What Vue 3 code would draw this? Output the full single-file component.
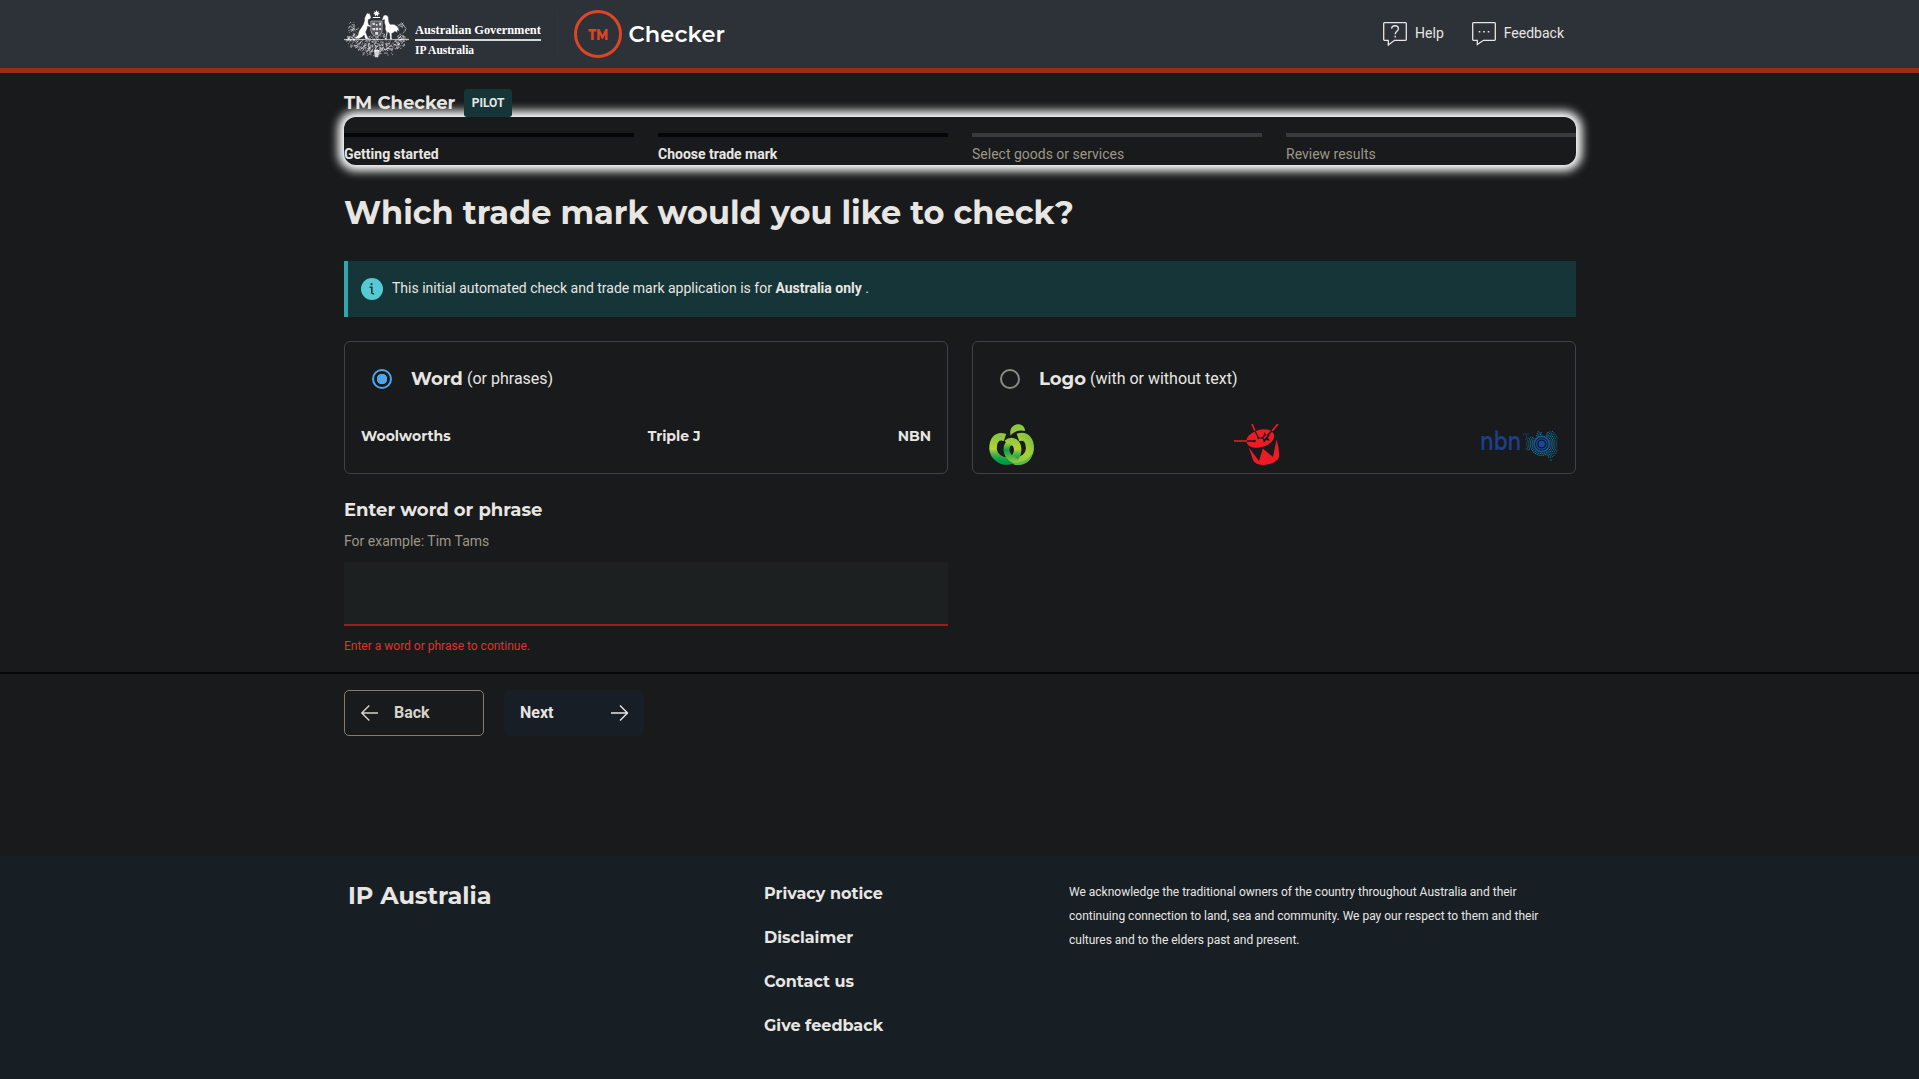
<script setup>
const steps = [
  { label: 'Getting started', done: true },
  { label: 'Choose trade mark', done: true },
  { label: 'Select goods or services', done: false },
  { label: 'Review results', done: false },
]
const links = ['Privacy notice', 'Disclaimer', 'Contact us', 'Give feedback']

// Small deterministic generator for the wattle foliage of the crest
function makeRandom(seed) {
  let s = seed
  return () => {
    s = (s * 16807) % 2147483647
    return s / 2147483647
  }
}
const rnd = makeRandom(77)
const curls = []
function addCurls(n, cx, cy, rx, ry) {
  for (let i = 0; i < n; i++) {
    const a = rnd() * Math.PI * 2
    const r = Math.sqrt(rnd())
    const x = cx + Math.cos(a) * r * rx
    const y = cy + Math.sin(a) * r * ry
    const dx = (rnd() - 0.5) * 12
    const dy = (rnd() - 0.5) * 9
    curls.push(`M${x.toFixed(1)} ${y.toFixed(1)}q${dy.toFixed(1)} ${dx.toFixed(1)} ${dx.toFixed(1)} ${dy.toFixed(1)}`)
  }
}
addCurls(200, 98, 105, 86, 18)
addCurls(110, 98, 120, 55, 20)
addCurls(44, 28, 60, 15, 27)
addCurls(34, 172, 62, 13, 27)
addCurls(30, 18, 88, 16, 7)
addCurls(28, 178, 88, 16, 7)
addCurls(28, 98, 76, 28, 12)
const foliage = curls.join('')

// Dotted map around the nbn rings
const dots = []
for (let k = 0; k < 5; k++) {
  const r = 9.6 + k * 1.75
  const n = Math.round(r * 3.1)
  for (let i = 0; i < n; i++) {
    const a = (i / n) * Math.PI * 2
    const x = Math.cos(a) * r
    const y = Math.sin(a) * r
    const inside = Math.abs(x) < 16 && y > -13 && y < 14 && !(y < -9 && Math.abs(x - 2) < 2.5)
      && !(y > 8 && x < 5 && k > 1) && !(y < -7 && x < -5) && !(y > 6 && x < -10)
    if (inside) dots.push({ x: 61.7 + x, y: 20 + y, r: 0.72 - k * 0.05 })
  }
}
</script>

<template>
  <div class="page">
    <header class="header">
      <div class="wrap header-row">
        <div class="gov">
          <svg class="crest" viewBox="0 0 196 144" width="65" height="48">
            <path :d="foliage" fill="none" stroke="#fff" stroke-width="1.800" opacity=".8" />
            <path d="M0 89h196" stroke="#fff" stroke-width="3" opacity=".75" />
            <path d="M70 8l3 4 3-4 4 9q3 5 0 8l-7 4q-1 8 1 14l8 5-1 3-10-2q-1 11-6 17l7 17 5 1v3H64l-3-12q-7 9-17 11-9 1-17-1 11-3 15-9 2-15 11-24 7-9 9-21-1-8 3-13z" fill="#fff" stroke="#2d3138" stroke-width="1" />
            <path d="M119 17q6-5 12 0 4 4 3 10 0 9 5 16 11-2 19 4 7 6 9 17l-7-3 1 7-8-4q-4 6-9 6v15l5 4h-13l3-4-2-16-5-2-4 17 4 5h-12l5-5 3-18q-6-8-3-18-4-8-3-20l-8 3z" fill="#fff" stroke="#2d3138" stroke-width="1" />
            <path d="M81 33h34v30q-2 12-17 18-15-6-17-18z" fill="#565a60" stroke="#c5c6c8" stroke-width="2" />
            <path d="M86 38h7v7h-7zM96 42h5v5h-5zM106 37h6v9h-6zM86 54h8v7h-8zM96 53h7v8h-7zM106 54h6v6h-6zM94 66h9v8h-9z" fill="#fff" opacity=".8" />
            <path d="M98 0l2.500 5.500 5.500-2-2.500 5.500 5 3-6 1 0 6-4.500-4-4.500 4 0-6-6-1 5-3-2.500-5.500 5.500 2zM87 21h22v3H87z" fill="#fff" />
            <path d="M90 120h16l-3 22h-10z" fill="#fff" opacity=".75" />
          </svg>
          <div class="gov-text">
            <span class="gov-name">Australian Government</span>
            <span class="gov-agency">IP Australia</span>
          </div>
        </div>
        <svg class="brand" viewBox="0 0 160 50" width="160" height="50">
          <circle cx="25" cy="25" r="22.500" fill="none" stroke="#dd4527" stroke-width="3" />
          <text x="15.300" y="30.600" textLength="19.800" lengthAdjust="spacingAndGlyphs" class="brand-tm">TM</text>
          <text x="55.500" y="32.800" textLength="96.500" class="brand-name">Checker</text>
        </svg>
        <nav class="tools">
          <a class="tool">
            <svg viewBox="0 0 24 24" width="24" height="24" fill="none" stroke="#e8e6e3" stroke-width="1.300">
              <path d="M1.500.700h21a.8.8 0 0 1 .8.8v16a.8.8 0 0 1-.8.8H11.500L5.300 23v-4.700H1.500a.8.8 0 0 1-.8-.8v-16a.8.8 0 0 1 .8-.8z" />
              <path d="M8.700 6.700C8.700 4.600 10 3.700 12 3.700s3.400 1.200 3.400 3c0 2.600-3.200 2.600-3.200 5.600M12.200 13.800v1.700" stroke-width="1.400" />
            </svg>
            <span>Help</span>
          </a>
          <a class="tool">
            <svg viewBox="0 0 24 24" width="24" height="24" fill="none" stroke="#e8e6e3" stroke-width="1.300">
              <path d="M1.500.700h21a.8.8 0 0 1 .8.8v16a.8.8 0 0 1-.8.8H11.500L5.300 22.500v-4.200H1.500a.8.8 0 0 1-.8-.8v-16a.8.8 0 0 1 .8-.8z" />
              <path d="M6.700 9.800h1.600M11.200 9.800h1.600M15.700 9.800h1.600" stroke-width="1.600" />
            </svg>
            <span>Feedback</span>
          </a>
        </nav>
      </div>
    </header>

    <main class="main">
      <div class="wrap">
        <div class="title-row">
          <span class="app-title heading">TM Checker</span>
          <span class="badge">PILOT</span>
        </div>
        <ol class="stepper">
          <li v-for="s in steps" :key="s.label" class="step" :class="{ done: s.done }">{{ s.label }}</li>
        </ol>
        <h1 class="question heading">Which trade mark would you like to check?</h1>
        <div class="alert">
          <svg viewBox="0 0 22 22" width="22" height="22">
            <circle cx="11" cy="11" r="11" fill="#55cad3" />
            <path d="M8.600 9.200h2.200v5.300q0 1.300 1.300 1.300h1" fill="none" stroke="#153538" stroke-width="1.600" />
            <circle cx="10.500" cy="6.200" r="1.100" fill="#153538" />
          </svg>
          <p>This initial automated check and trade mark application is for <b>Australia only</b> .</p>
        </div>
        <div class="cards">
          <section class="card">
            <div class="card-head">
              <span class="radio on"></span>
              <span class="card-name heading">Word</span>
              <span class="card-note">(or phrases)</span>
            </div>
            <div class="examples">
              <span class="heading">Woolworths</span>
              <span class="heading">Triple J</span>
              <span class="heading">NBN</span>
            </div>
          </section>
          <section class="card">
            <div class="card-head">
              <span class="radio"></span>
              <span class="card-name heading logo">Logo</span>
              <span class="card-note">(with or without text)</span>
            </div>
            <div class="logos">
              <svg viewBox="0 0 45 41" width="45" height="41">
                <defs>
                  <linearGradient id="wl" x1="0" y1="0" x2="0" y2="1">
                    <stop offset="0" stop-color="#8cc63f" /><stop offset=".5" stop-color="#b5d333" /><stop offset=".72" stop-color="#4bb04a" /><stop offset="1" stop-color="#009b48" />
                  </linearGradient>
                  <linearGradient id="wr" x1="1" y1="0" x2="0.200" y2="1">
                    <stop offset="0" stop-color="#7fc242" /><stop offset=".5" stop-color="#a9d036" /><stop offset="1" stop-color="#8fc93c" />
                  </linearGradient>
                  <linearGradient id="wi" x1="0" y1="0" x2="0" y2="1">
                    <stop offset="0" stop-color="#a5cf3a" /><stop offset=".4" stop-color="#0f9d49" /><stop offset="1" stop-color="#86c440" />
                  </linearGradient>
                </defs>
                <path d="M29 13.500C37.500 10.500 41 17 41 24.500 40.500 32 34 37.500 26 37" fill="none" stroke="url(#wr)" stroke-width="8" />
                <path d="M16 13.500C7.500 10.500 4 17 4 24.500 4.500 32.500 12 37.500 19 37 26 36 29.500 30 28.500 24 27.500 17.500 22 16 18 19.500" fill="none" stroke="url(#wl)" stroke-width="7.500" />
                <path d="M20.500 18.500C16 23 15.500 33 28 37.500" fill="none" stroke="url(#wi)" stroke-width="6" />
                <path d="M31 38c5-1 9-4 12-8 0 6-6 11-14 11-3 0-5-1-7-2 3 .5 6 0 9-1z" fill="#5cb747" />
                <path d="M21.500 11.500C20 4 25-.500 31 .500c3 .6 5 3 5 6.500-5-1.500-10 0-14.500 4.500z" fill="#8fc741" />
              </svg>
              <svg viewBox="0 0 46 41" width="46" height="41">
                <g fill="#ed1c24">
                  <ellipse cx="26.300" cy="14.500" rx="14.200" ry="8.700" transform="rotate(-16 26.300 14.500)" />
                  <path d="M14.800 23.500L25 37l3.800-12.500L39 33l3.500-17.500Q46 26 44.800 34 41 40 30 41q-9 0-11-5z" />
                </g>
                <path d="M0 17h14M18 0l3 7M44 0l-6 7" stroke="#ed1c24" stroke-width="1.700" />
                <path d="M13 17h8M20.800 6.500L24.500 14M38.200 6.800L31 13.500" stroke="#181a1b" stroke-width="1.300" />
                <circle cx="20.500" cy="17" r="1.300" fill="#181a1b" /><circle cx="24.500" cy="14" r="1.200" fill="#181a1b" />
                <path d="M30.500 8l1.700 3 4-.6-2.200 3 2 3.300-3.700-.8-2.500 2.800-.7-3.500-3.400-1.200 3.300-1.600z" fill="#181a1b" />
                <path d="M33 11l-3 3.500" stroke="#ed1c24" stroke-width="1.600" />
              </svg>
              <svg viewBox="-1 0 80 41" width="80" height="41">
                <text x="0" y="26" textLength="41.200" lengthAdjust="spacingAndGlyphs" class="nbn-text">nbn</text>
                <text x="42.600" y="12" class="nbn-tm">TM</text>
                <circle cx="61.700" cy="20" r="3.200" fill="#17479e" />
                <circle cx="61.700" cy="20" r="5.200" fill="none" stroke="#17479e" stroke-width="1.300" />
                <circle cx="61.700" cy="20" r="7.600" fill="none" stroke="#125a9c" stroke-width="1.600" />
                <circle v-for="(d, i) in dots" :key="i" :cx="d.x" :cy="d.y" :r="d.r" fill="#147fb0" />
                <path d="M69 35.500h3.500l-1.500 2z" fill="#14506e" />
              </svg>
            </div>
          </section>
        </div>
        <h2 class="field-title heading">Enter word or phrase</h2>
        <p class="hint">For example: Tim Tams</p>
        <div class="textarea"></div>
        <p class="error">Enter a word or phrase to continue.</p>
      </div>
      <div class="actions">
        <div class="wrap buttons">
          <button class="btn back">
            <svg viewBox="0 0 18 18" width="18" height="18" fill="none" stroke="currentColor" stroke-width="1.400"><path d="M17 9H.800M8.300 1.500L.800 9l7.500 7.500" /></svg>
            <span>Back</span>
          </button>
          <button class="btn next">
            <span>Next</span>
            <svg viewBox="0 0 18 18" width="18" height="18" fill="none" stroke="currentColor" stroke-width="1.400"><path d="M0 9h16.500M9 1.500L16.500 9 9 16.500" /></svg>
          </button>
        </div>
      </div>
    </main>

    <footer class="footer">
      <div class="wrap footer-grid">
        <div class="footer-title heading">IP Australia</div>
        <ul class="links">
          <li v-for="l in links" :key="l" class="heading">{{ l }}</li>
        </ul>
        <p class="ack">We acknowledge the traditional owners of the country throughout Australia and their<br>continuing connection to land, sea and community. We pay our respect to them and their<br>cultures and to the elders past and present.</p>
      </div>
    </footer>
  </div>
</template>

<style>
html, body { margin: 0; background: #181a1b; }
</style>

<style scoped>
.page { height: 1079px; display: flex; flex-direction: column; overflow: hidden; background: #181a1b; color: #e8e6e3; font: 14px/20px Roboto, "Liberation Sans", sans-serif; }
.wrap { width: 1232px; margin: 0 auto 0 344px; }
p, h1, h2, ol, ul { margin: 0; padding: 0; list-style: none; }
.heading { font-family: Montserrat, Inter, sans-serif; font-weight: 700; white-space: nowrap; }

.header { height: 68px; flex: none; background: #2d3138; border-bottom: 5px solid #9b2c17; }
.header-row { display: flex; height: 68px; }
.gov { display: flex; box-sizing: border-box; width: 214px; height: 48px; margin-top: 10px; border-right: 1px solid #31343a; }
.crest { flex: none; }
.gov-text { width: 126px; margin-left: 6px; color: #fff; font-family: "Liberation Serif", serif; font-weight: 700; white-space: nowrap; }
.gov-name { display: block; box-sizing: border-box; height: 31px; padding-top: 10px; border-bottom: 2px solid #d6d7d8; font-size: 12.350px; line-height: 20px; }
.gov-agency { display: block; font-size: 11.500px; line-height: 18px; }
.brand { margin: 9px 0 0 15px; }
.brand-tm { font: 800 16px Montserrat, Inter, sans-serif; fill: #dd4527; }
.brand-name { font: 600 22.500px Montserrat, Inter, sans-serif; fill: #fff; }
.tools { display: flex; gap: 28px; margin-left: auto; margin-right: 12px; padding-top: 22px; height: 24px; }
.tool { display: flex; gap: 8px; font-size: 14px; line-height: 22px; }

.main { height: 783px; flex: none; }
.title-row { display: flex; align-items: center; padding-top: 16px; height: 28px; }
.app-title { width: 120px; font-size: 18px; line-height: 28px; }
.badge { width: 48px; height: 28px; border-radius: 3px; background: #153538; font-size: 12px; line-height: 28px; font-weight: 700; text-align: center; }
.stepper { display: flex; gap: 24px; box-sizing: border-box; height: 48px; padding-top: 16px; border-radius: 12px; box-shadow: 0 0 10px 6px #fff; }
.step { flex: 1; padding-top: 6px; line-height: 22px; border-top: 4px solid #363b3d; color: #9e9689; height: 22px; }
.step.done { border-color: #02070c; color: #e8e6e3; font-weight: 700; }
.question { margin-top: 25px; font-size: 32px; line-height: 45px; }
.alert { display: flex; align-items: center; box-sizing: border-box; height: 56px; margin-top: 26px; padding-left: 13px; border-left: 4px solid #2ea8ae; background: #153538; }
.alert p { margin: 0 0 2px 9px; white-space: nowrap; }
.cards { display: grid; grid-template-columns: 1fr 1fr; gap: 24px; margin-top: 24px; }
.card { box-sizing: border-box; height: 133px; padding: 27px 16px 0; border: 1px solid #3e4446; border-radius: 6px; }
.card-head { display: flex; align-items: center; height: 20px; padding-left: 11px; font-size: 16px; }
.radio { box-sizing: border-box; width: 20px; height: 20px; border: 2px solid #8e8b86; border-radius: 50%; }
.radio.on { border-color: #4fa4ec; background: radial-gradient(circle, #4fa4ec 5px, transparent 5.500px); }
.card-name { width: 56px; margin-left: 19px; font-size: 18px; }
.card-name.logo { width: 51px; }
.examples { display: flex; justify-content: space-between; margin-top: 37px; font-size: 14px; }
.logos { display: flex; justify-content: space-between; margin-top: 35px; }
.nbn-text { font: 600 25px Montserrat, Inter, sans-serif; fill: #1d3f87; }
.nbn-tm { font: 4px Inter, sans-serif; fill: #1d3f87; }
.field-title { margin-top: 24px; font-size: 18px; line-height: 24px; }
.hint { margin-top: 9px; color: #9e9689; }
.textarea { box-sizing: border-box; width: 604px; height: 64px; margin-top: 11px; background: #1d2021; border-bottom: 2px solid #9a1c1c; }
.error { margin-top: 12px; font-size: 12px; line-height: 16px; color: #e23030; }
.actions { margin-top: 18px; padding-top: 16px; border-top: 2px solid #060707; }
.buttons { display: flex; gap: 20px; }
.btn { display: flex; align-items: center; box-sizing: border-box; width: 140px; height: 46px; padding: 0 16px; border: 1px solid #857c6f; border-radius: 5px; background: none; color: #d6d2cc; font: 700 16px/20px Roboto, sans-serif; }
.back { gap: 15px; }
.next { justify-content: space-between; border-color: #171e26; background: #171e26; color: #e8e6e3; padding: 0 14px 0 15px; }

.footer { flex: 1; background: #171e24; }
.footer-grid { display: grid; grid-template-columns: 416px 305px 1fr; box-sizing: border-box; padding: 24px 0 0 4px; }
.footer-title { font-size: 24px; line-height: 32px; }
.links { display: flex; flex-direction: column; gap: 20px; font-size: 16px; line-height: 24px; padding-top: 2px; }
.ack { font-size: 12px; line-height: 24px; white-space: nowrap; }
</style>
